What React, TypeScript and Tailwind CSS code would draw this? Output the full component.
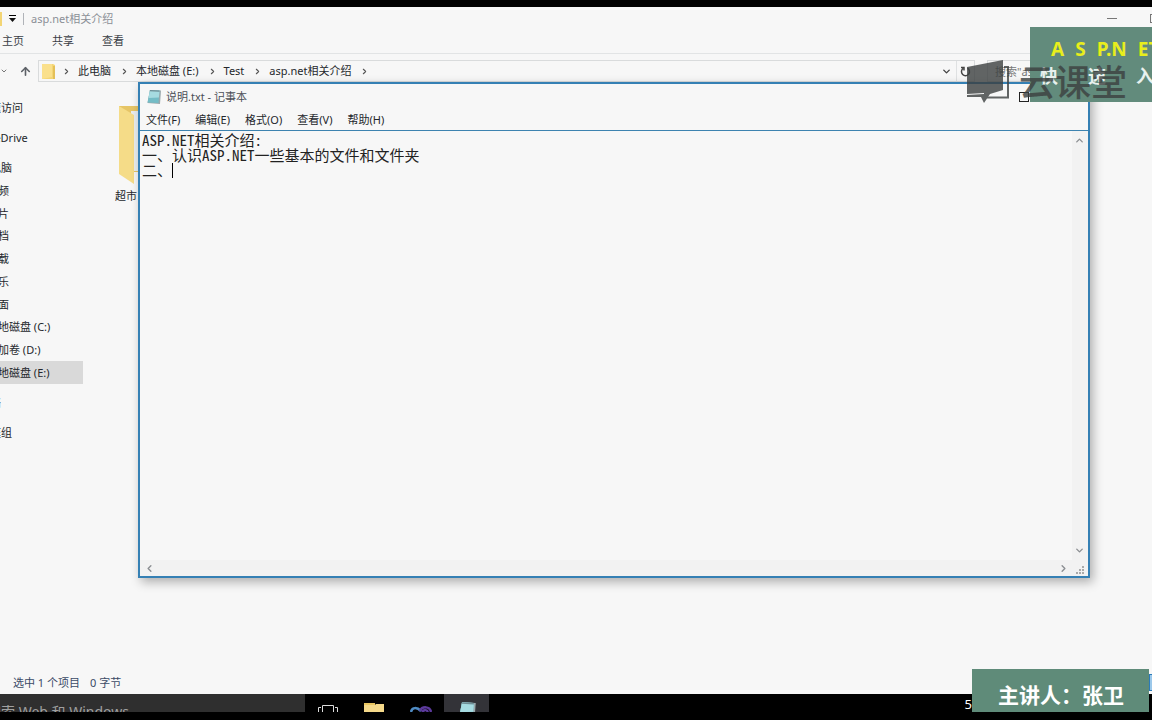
import { useState } from "react";
import { ArrowUp, ChevronDown, ChevronLeft, ChevronRight, ChevronUp } from "lucide-react";

const menus = ["文件(F)", "编辑(E)", "格式(O)", "查看(V)", "帮助(H)"];
const tabs = ["主页", "共享", "查看"];
const crumbs = ["此电脑", "本地磁盘 (E:)", "Test", "asp.net相关介绍"];
const places = ["视频", "图片", "文档", "下载", "音乐", "桌面", "本地磁盘 (C:)", "新加卷 (D:)", "本地磁盘 (E:)"];

function SmallFolder() {
  return (
    <svg className="h-[15px] w-[13px] shrink-0" viewBox="0 0 13 15">
      <path d="M0 0h11l2 1v14H0z" fill="#f3d574" />
      <path d="M0 0h10v13l-10 2z" fill="#fae08c" />
      <path d="M11 2h2v13h-2z" fill="#e4c058" />
    </svg>
  );
}

function NoteIcon({ className }: { className: string }) {
  return (
    <svg className={className} viewBox="0 0 16 16">
      <path d="M4 1l11 .5L14 15 1.500 14z" fill="#9aa8ac" />
      <path d="M4 1l9.500.5L12.500 14 1.500 13.500z" fill="#74bcc6" />
      <path d="M4 1l9.500.5-.6 7L2.500 9z" fill="#a6dbe1" />
      <path d="M4 1l9.500.5v1.200l-9.700-.5z" fill="#6e8c94" />
    </svg>
  );
}

function Explorer() {
  return (
    <div className="flex min-h-0 flex-1 flex-col bg-[#f7f7f7]">
      {/* Title bar */}
      <header className="flex h-[23px] shrink-0 items-center text-[#8b8f96]">
        <span className="h-[14px] w-[2px] bg-[#f3d574]" />
        <button aria-label="自定义快速访问工具栏" className="ml-[7px] flex w-[7px] flex-col items-center gap-[2px]">
          <span className="h-px w-[7px] bg-black" />
          <svg className="h-1 w-[7px]" viewBox="0 0 7 4">
            <path d="M0 0h7L3.500 4z" fill="#111" />
          </svg>
        </button>
        <span className="ml-[7px] h-3 w-px bg-[#b0b3b8]" />
        <h1 className="ml-[7px]">asp.net相关介绍</h1>
        <button aria-label="最小化" className="mr-[33px] ml-auto h-px w-[10px] bg-[#777]" />
        <button aria-label="最大化" className="h-[9px] w-[2px] border-y border-l border-[#777]" />
      </header>

      {/* Ribbon tabs */}
      <nav className="flex h-6 shrink-0 items-center gap-7 border-b border-[#e2e4e5] pb-[2px] pl-[2px] text-[#3b3f46]">
        {tabs.map((t) => (
          <button key={t}>{t}</button>
        ))}
      </nav>

      {/* Address bar */}
      <div className="mt-[6px] flex h-[22px] shrink-0 items-center">
        <button aria-label="最近位置" className="w-2">
          <ChevronDown className="size-2 text-[#777]" strokeWidth={3} />
        </button>
        <button aria-label="向上" className="ml-[11px]">
          <ArrowUp className="size-[13px] text-[#5d6167]" strokeWidth={3} />
        </button>
        <div className="ml-[6px] flex h-[22px] flex-1 items-center border border-[#d9dbdc] pl-[3px]">
          <div className="flex flex-1 items-center gap-[7px]">
            <SmallFolder />
            <ChevronRight className="size-[9px] text-[#555]" strokeWidth={3} />
            {crumbs.map((c) => (
              <div key={c} className="flex items-center gap-[9px]">
                <button>{c}</button>
                <ChevronRight className="size-[9px] text-[#555]" strokeWidth={3} />
              </div>
            ))}
          </div>
          <button aria-label="以前的位置" className="mr-1">
            <ChevronDown className="size-[11px] text-[#444]" strokeWidth={3} />
          </button>
          <button aria-label="刷新" className="flex h-5 w-[18px] items-center justify-center border-l border-[#dfe1e2]">
            <svg className="size-[11px]" viewBox="0 0 11 11" fill="none" stroke="#444" strokeWidth="1.500">
              <path d="M7.500 2.200A4 4 0 1 1 3 2.500M1 1.500h3v3" />
            </svg>
          </button>
        </div>
        <input
          aria-label="搜索"
          placeholder={'搜索"asp.net相关介绍"'}
          className="ml-3 h-[22px] w-[165px] shrink-0 border border-[#d9dbdc] pl-[7px] placeholder:text-[#777]"
        />
      </div>

      {/* Navigation pane and files */}
      <div className="flex min-h-0 flex-1">
        <aside className="-ml-[21px] w-[104px] shrink-0 pt-[11px] whitespace-nowrap">
          <div className="h-[30px] leading-[30px]">快速访问</div>
          <div className="h-[30px] leading-[30px]">OneDrive</div>
          <ul className="flex h-[231px] flex-col pt-[4px]">
            <li className="flex flex-1 items-center">此电脑</li>
            {places.map((p, i) => (
              <li key={i} className={`flex flex-1 items-center pl-2 ${i === places.length - 1 ? "bg-[#d9d9d9]" : ""}`}>
                {p}
              </li>
            ))}
          </ul>
          <div className="mt-1 h-[30px] leading-[30px]">网络</div>
          <div className="h-[30px] leading-[30px]">家庭组</div>
        </aside>
        <div className="ml-8 pt-6">
          <svg className="ml-1 h-[78px] w-12" viewBox="0 0 48 78">
            <path d="M0 0h48v66H0z" fill="#e6c566" />
            <path d="M12 5h36v60H12z" fill="#e9eef0" />
            <path d="M0 0l15 9v69L0 68z" fill="#f5dc88" />
          </svg>
          <p className="mt-1">超市</p>
        </div>
      </div>

      {/* Status bar */}
      <footer className="flex h-6 shrink-0 items-center gap-[10px] pt-px pl-[13px] text-[#3a4a66]">
        <span>选中 1 个项目</span>
        <span>0 字节</span>
        <button aria-label="大图标" className="ml-auto h-[17px] w-[3px] border border-r-0 border-[#2a7ab8] bg-[#9cc8ea]" />
      </footer>
    </div>
  );
}

function Notepad() {
  const [text, setText] = useState("ASP.NET相关介绍:\n一、认识ASP.NET一些基本的文件和文件夹\n二、");

  return (
    <section className="absolute top-[82px] right-[62px] bottom-[142px] left-[138px] flex flex-col border-2 border-[#3580b4] bg-[#f7f7f7] shadow-[3px_4px_10px_rgba(0,0,0,0.3)]">
      <header className="flex h-[26px] shrink-0 items-center text-[#4c5058]">
        <NoteIcon className="ml-[6px] size-4" />
        <h2 className="ml-1">说明.txt - 记事本</h2>
        <button aria-label="最大化" className="mr-[59px] ml-auto size-[10px] border border-[#222]" />
      </header>
      <nav className="flex h-[21px] shrink-0 items-center gap-[15px] border-b border-[#3d83b0] pl-[6px]">
        {menus.map((m) => (
          <button key={m}>{m}</button>
        ))}
      </nav>
      <div className="flex min-h-0 flex-1">
        <div className="relative flex flex-1">
          <textarea
            aria-label="文本编辑器"
            value={text}
            onChange={(e) => setText(e.target.value)}
            spellCheck={false}
            className="flex-1 resize-none overflow-hidden px-[2px] pt-px font-['Noto_Sans_Mono_CJK_SC','Liberation_Sans_Narrow','Noto_Sans_CJK_SC',monospace] text-[15px] leading-[15px] font-light text-[#222] outline-none"
          />
          <span className="absolute top-8 left-8 h-[15px] w-px bg-black" />
        </div>
        <div className="flex w-4 shrink-0 flex-col items-center justify-between bg-[#f2f2f2] py-1 text-[#8b8e92]">
          <button aria-label="向上滚动" className="mr-[2px]">
            <ChevronUp className="size-[11px]" strokeWidth={3} />
          </button>
          <button aria-label="向下滚动" className="mr-[2px]">
            <ChevronDown className="size-[11px]" strokeWidth={3} />
          </button>
        </div>
      </div>
      <div className="flex h-4 shrink-0 items-center justify-between bg-[#f2f2f2] pl-1 text-[#8b8e92]">
        <button aria-label="向左滚动">
          <ChevronLeft className="size-[11px]" strokeWidth={3} />
        </button>
        <div className="flex items-center gap-[6px] pr-[3px]">
          <button aria-label="向右滚动">
            <ChevronRight className="size-[11px]" strokeWidth={3} />
          </button>
          <svg className="mt-1 size-[10px]" viewBox="0 0 10 10" fill="#aaa">
            <path d="M7 1h2v2H7zM4 4h2v2H4zM7 4h2v2H7zM1 7h2v2H1zM4 7h2v2H4zM7 7h2v2H7z" />
          </svg>
        </div>
      </div>
    </section>
  );
}

function Taskbar() {
  return (
    <div className="flex h-[26px] shrink-0 bg-black pb-2">
      <div className="h-[18px] w-[305px] overflow-hidden bg-[#2f2f2f]">
        <button className="-ml-[13px] pt-[9px] text-[14px] leading-[18px] whitespace-nowrap text-[#a0a0a0]">搜索 Web 和 Windows</button>
      </div>
      <button aria-label="任务视图" className="flex w-[46px] items-end justify-center">
        <svg className="h-[7px] w-5" viewBox="0 0 20 7" fill="none" stroke="#ddd">
          <path d="M4.500 7V.5h11V7M3 2.500H.5V7M17 2.500h2.500V7" />
        </svg>
      </button>
      <button aria-label="文件资源管理器" className="flex w-[46px] items-end justify-center">
        <svg className="h-[9px] w-5" viewBox="0 0 20 9">
          <path d="M0 0h11v3H0z" fill="#e9c55f" />
          <path d="M0 2l11 0 1-1h8v8H0z" fill="#f5d98a" />
        </svg>
      </button>
      <button aria-label="Visual Studio" className="flex w-[47px] items-end justify-center">
        <svg className="h-[6px] w-[22px]" viewBox="0 0 22 6" fill="none" strokeWidth="2.500">
          <path d="M1 6c1-5 6-5 10-1" stroke="#4f8cc4" />
          <path d="M10 5c2-5 10-5 11 1M12 6c3-3 5-2 6 0" stroke="#5c3a9c" />
        </svg>
      </button>
      <button aria-label="记事本" className="flex w-[45px] items-start justify-center overflow-hidden bg-[#333338] pt-[7px]">
        <NoteIcon className="size-5 shrink-0" />
      </button>
      <span className="mr-[180px] ml-auto pt-px text-[13px] leading-[18px] text-white">5</span>
    </div>
  );
}

export default function App() {
  return (
    <main className="relative flex h-screen flex-col overflow-hidden bg-black pt-[7px] font-['Noto_Sans','Noto_Sans_CJK_SC',sans-serif] text-[11px] leading-4 text-[#24272c]">
      <Explorer />
      <Taskbar />
      <Notepad />

      {/* Course banner */}
      <div className="absolute top-[27px] right-0 h-[75px] w-[122px] overflow-hidden bg-[#628b7c] pt-[10px] pl-[10px] font-bold whitespace-nowrap">
        <div className="flex gap-[11px] pl-[11px] font-['Noto_Sans',sans-serif] text-[19px] leading-6 text-[#e8ee1c]">
          <span>A</span>
          <span>S</span>
          <span>P.N</span>
          <span>ET</span>
        </div>
        <div className="mt-[3px] flex gap-[30px] text-[18px] leading-6 text-[#e8f1ee]">
          <span>快</span>
          <span>速</span>
          <span>入</span>
          <span>门</span>
        </div>
      </div>

      {/* Watermark */}
      <div className="absolute top-[60px] right-[25px] flex items-start gap-[10px] text-[#3c4040] opacity-80">
        <svg className="h-[43px] w-[42px]" viewBox="0 0 42 43">
          <path d="M0 7L36 0v30l-13 4-6 9-3-6H0l0-2 17-1v-1L0 34z" fill="currentColor" />
          <path d="M37 7h4v30.500H20" fill="none" stroke="currentColor" strokeWidth="2" />
        </svg>
        <span className="pt-px text-[36px] leading-[44px] font-medium">云课堂</span>
      </div>

      {/* Presenter */}
      <div className="absolute right-[3px] bottom-2 flex h-[43px] w-[177px] items-center bg-[#5f8b79] pt-2 pl-[26px] text-[21px] leading-6 font-bold whitespace-nowrap text-white">
        主讲人：张卫
      </div>
    </main>
  );
}
